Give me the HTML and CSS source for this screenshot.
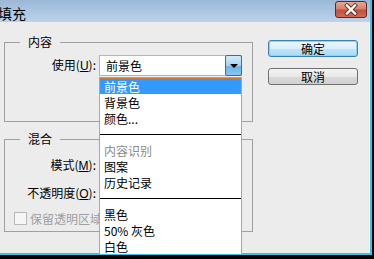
FILE: index.html
```html
<!DOCTYPE html>
<html>
<head>
<meta charset="utf-8">
<link rel="stylesheet" href="styles.css">
</head>
<body>
<div class="window">
  <div class="titlebar">
    <span class="title">填充</span>
    <div class="close">
      <svg width="30" height="15" viewBox="0 0 30 15">
        <path d="M11 3.5 L19 11.5 M19 3.5 L11 11.5" stroke="#5a2a22" stroke-width="4" stroke-linecap="square"/>
        <path d="M11 3.5 L19 11.5 M19 3.5 L11 11.5" stroke="#ffffff" stroke-width="2.4" stroke-linecap="square"/>
      </svg>
    </div>
  </div>
  <div class="client">
    <div class="leftcol">
      <fieldset class="group g1">
        <legend>内容</legend>
        <div class="row">
          <label class="lbl">使用(<u>U</u>):</label>
          <div class="combo">
            <span class="combo-text">前景色</span>
            <span class="combo-btn"><span class="arrow"></span></span>
          </div>
        </div>
      </fieldset>
      <fieldset class="group g2">
        <legend>混合</legend>
        <div class="row">
          <label class="lbl">模式(<u>M</u>):</label>
        </div>
        <div class="row row2">
          <label class="lbl">不透明度(<u>O</u>):</label>
        </div>
        <div class="checkrow">
          <span class="checkbox"></span>
          <span class="checklbl">保留透明区域</span>
        </div>
      </fieldset>
    </div>
    <div class="rightcol">
      <button class="btn btn-default">确定</button>
      <button class="btn">取消</button>
    </div>
    <ul class="dropdown">
      <li class="item selected">前景色</li>
      <li class="item">背景色</li>
      <li class="item">颜色...</li>
      <li class="sep"></li>
      <li class="item disabled">内容识别</li>
      <li class="item">图案</li>
      <li class="item">历史记录</li>
      <li class="sep"></li>
      <li class="item">黑色</li>
      <li class="item">50% 灰色</li>
      <li class="item">白色</li>
    </ul>
  </div>
</div>
</body>
</html>
```
FILE: styles.css
```css
html, body {
  margin: 0;
  padding: 0;
  background: #000;
  width: 374px;
  height: 259px;
  overflow: hidden;
}
body {
  font-family: "Noto Sans CJK SC", "Liberation Sans", sans-serif;
  font-size: 12px;
  color: #000;
}
.window {
  width: 370px;
  height: 253px;
  border-right: 2px solid #3cc0e6;
  border-bottom: 2px solid #3cc0e6;
  background: #ececec;
  display: flex;
  flex-direction: column;
}
.titlebar {
  height: 22px;
  background: linear-gradient(#9cb8d7, #bcd3ea);
  display: flex;
  align-items: center;
  justify-content: space-between;
  padding-right: 3px;
  box-sizing: border-box;
}
.title {
  font-size: 14px;
  line-height: 16px;
  margin-left: -2px;
  margin-top: 4px;
}
.close {
  width: 30px;
  height: 15px;
  margin-top: -3px;
  border: 1px solid #5d2a24;
  border-radius: 3px;
  background: linear-gradient(#e6a796 0%, #d4826e 45%, #c2503a 55%, #cf6a55 100%);
  display: flex;
}
.client {
  flex: 1;
  display: flex;
  padding: 13px 0 0 4px;
  position: relative;
  box-shadow: inset -1px 0 0 #f4f4f4;
}
.leftcol {
  display: flex;
  flex-direction: column;
  width: 249px;
}
.group {
  margin: 0;
  padding: 0;
  border: 1px solid #a0a0a0;
  min-width: 0;
}
.group legend {
  margin-left: 15px;
  padding: 0 8px;
  font-size: 12px;
  line-height: 14px;
}
.g1 {
  padding-top: 6px;
  padding-bottom: 45px;
}
.g2 {
  margin-top: 10px;
  padding-top: 9px;
  padding-bottom: 3px;
}
.row {
  display: flex;
  align-items: center;
  height: 21px;
}
.row2 {
  margin-top: 7px;
}
.lbl {
  width: 91px;
  text-align: right;
  white-space: nowrap;
  line-height: 21px;
  margin-right: 3px;
}
.lbl u {
  font-family: "Liberation Sans", sans-serif;
}
.combo {
  width: 143px;
  height: 21px;
  box-sizing: border-box;
  background: #fff;
  border: 1px solid #a8b8c8;
  display: flex;
  align-items: stretch;
}
.combo-text {
  flex: 1;
  padding-left: 6px;
  line-height: 20px;
}
.combo-btn {
  width: 15px;
  margin: -1px -1px -1px 0;
  border: 1px solid #3c6f98;
  border-radius: 2px;
  background: linear-gradient(#d4ecfa, #a6d3f2 50%, #6fb3e3 51%, #8ac6ee);
  display: flex;
  align-items: center;
  justify-content: center;
}
.arrow {
  width: 0;
  height: 0;
  border-left: 4px solid transparent;
  border-right: 4px solid transparent;
  border-top: 4px solid #000;
}
.checkrow {
  display: flex;
  align-items: center;
  height: 20px;
  margin-top: 4px;
  padding-left: 9px;
  white-space: nowrap;
  overflow: hidden;
}
.checkbox {
  flex: none;
  width: 11px;
  height: 11px;
  border: 1px solid #b8b8b8;
  background: #f6f6f6;
  margin-right: 3px;
}
.checklbl {
  color: #a0a0a0;
  font-size: 12px;
}
.rightcol {
  display: flex;
  flex-direction: column;
  margin-left: 15px;
  padding-top: 5px;
}
.btn {
  width: 90px;
  height: 17px;
  padding: 0;
  border: 1px solid #707070;
  border-radius: 3px;
  background: linear-gradient(#f4f4f4, #e8e8e8 50%, #dadada 51%, #d0d0d0);
  font-family: "Noto Sans CJK SC", sans-serif;
  font-size: 12px;
  line-height: 15px;
  color: #000;
}
.btn + .btn {
  margin-top: 11px;
}
.btn-default {
  border-color: #3c7fb1;
  background: linear-gradient(#eaf6fd, #d9f0fc 50%, #bee6fd 51%, #a7d9f5);
  box-shadow: inset 0 0 0 1px #8fd0f4;
}
.dropdown {
  position: absolute;
  left: 99px;
  top: 55px;
  width: 143px;
  height: 177px;
  margin: 0;
  padding: 0;
  list-style: none;
  box-sizing: border-box;
  background: #fff;
  border: 1px solid #a8a8a8;
  border-bottom: none;
  overflow: hidden;
}
.item {
  height: 16px;
  line-height: 14px;
  padding-left: 4px;
  padding-top: 2px;
  box-sizing: border-box;
  white-space: nowrap;
}
.item.selected {
  background: #3399ff;
  color: #fff;
  outline: 1px dotted #c87a30;
  outline-offset: -1px;
}
.item.disabled {
  color: #8a8a8a;
}
.sep {
  height: 16px;
  position: relative;
}
.sep::after {
  content: "";
  position: absolute;
  left: 0;
  right: 0;
  top: 8px;
  height: 1px;
  background: #000;
}
```
